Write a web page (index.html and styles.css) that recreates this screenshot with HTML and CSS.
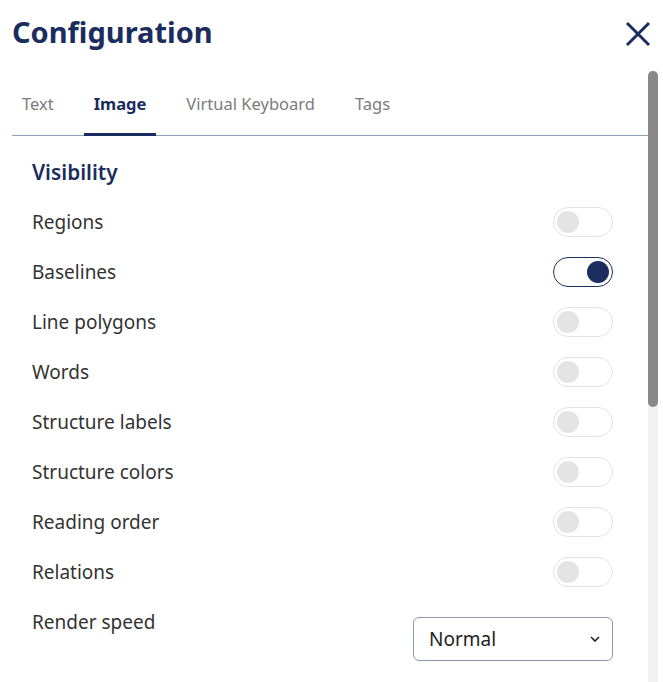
FILE: index.html
```html
<!DOCTYPE html>
<html>
<head>
<meta charset="utf-8">
<link rel="stylesheet" href="styles.css">
</head>
<body>
<div class="dialog">
  <header class="header">
    <h1 class="title">Configuration</h1>
    <button class="close" aria-label="Close">
      <svg width="26" height="26" viewBox="0 0 26 26"><path d="M2 2 L24 24 M24 2 L2 24" stroke="#1b2d5e" stroke-width="3" fill="none"/></svg>
    </button>
  </header>
  <div class="body">
    <div class="scroll">
      <nav class="tabs">
        <div class="tab">Text</div>
        <div class="tab active">Image</div>
        <div class="tab">Virtual Keyboard</div>
        <div class="tab">Tags</div>
      </nav>
      <section class="panel">
        <h2 class="section-title">Visibility</h2>
        <div class="row"><span class="label">Regions</span><span class="toggle"><span class="knob"></span></span></div>
        <div class="row"><span class="label">Baselines</span><span class="toggle on"><span class="knob"></span></span></div>
        <div class="row"><span class="label">Line polygons</span><span class="toggle"><span class="knob"></span></span></div>
        <div class="row"><span class="label">Words</span><span class="toggle"><span class="knob"></span></span></div>
        <div class="row"><span class="label">Structure labels</span><span class="toggle"><span class="knob"></span></span></div>
        <div class="row"><span class="label">Structure colors</span><span class="toggle"><span class="knob"></span></span></div>
        <div class="row"><span class="label">Reading order</span><span class="toggle"><span class="knob"></span></span></div>
        <div class="row"><span class="label">Relations</span><span class="toggle"><span class="knob"></span></span></div>
        <div class="row row-select">
          <span class="label">Render speed</span>
          <div class="select">
            <span>Normal</span>
            <svg width="10" height="6" viewBox="0 0 10 6"><path d="M1 1 L5 5 L9 1" stroke="#222" stroke-width="1.6" fill="none"/></svg>
          </div>
        </div>
      </section>
    </div>
    <div class="scrollbar"><div class="thumb"></div></div>
  </div>
</div>
</body>
</html>
```
FILE: styles.css
```css
html, body {
  margin: 0;
  padding: 0;
  background: #fff;
  font-family: "Noto Sans", "Open Sans", sans-serif;
  overflow: hidden;
}
.dialog {
  width: 663px;
  height: 682px;
  display: flex;
  flex-direction: column;
}
.header {
  display: flex;
  justify-content: space-between;
  align-items: flex-start;
  padding: 0 12px 0 12px;
  height: 71px;
  box-sizing: border-box;
  flex: none;
}
.title {
  margin: 0;
  padding-top: 11px;
  font-size: 29px;
  line-height: 42px;
  font-weight: 700;
  color: #1b2d5e;
}
.close {
  border: none;
  background: none;
  padding: 0;
  margin-top: 21px;
  width: 26px;
  height: 26px;
  display: flex;
}
.body {
  flex: 1;
  min-height: 0;
  display: flex;
  padding-right: 5px;
}
.scroll {
  flex: 1;
  overflow: hidden;
  padding-left: 12px;
}
.scrollbar {
  width: 10px;
  background: #f1f1f1;
  flex: none;
}
.thumb {
  height: 336px;
  background: #888;
  border-radius: 5px;
}
.tabs {
  display: flex;
  gap: 20px;
  border-bottom: 1px solid #8fa0bd;
}
.tab {
  padding: 21px 10px 18px;
  font-size: 16.5px;
  line-height: 23px;
  color: #7b7b7b;
  border-bottom: 3px solid transparent;
  margin-bottom: -1px;
}
.tab.active {
  color: #1b2d5e;
  font-weight: 700;
  border-bottom-color: #1b2d5e;
}
.panel {
  padding: 21px 35px 0 20px;
}
.section-title {
  margin: 0 0 10px;
  font-size: 20.8px;
  line-height: 30px;
  font-weight: 600;
  color: #1b2d5e;
}
.row {
  height: 50px;
  display: flex;
  align-items: center;
  justify-content: space-between;
}
.label {
  font-size: 19px;
  line-height: 30px;
  color: #333;
}
.toggle {
  width: 60px;
  height: 30px;
  box-sizing: border-box;
  border: 1px solid #e3e3e3;
  border-radius: 15px;
  display: flex;
  align-items: center;
  padding: 0 3px;
}
.knob {
  width: 22px;
  height: 22px;
  border-radius: 50%;
  background: #e4e4e4;
}
.toggle.on {
  border: 1.5px solid #1b2d5e;
  justify-content: flex-end;
}
.toggle.on .knob {
  background: #1b2d5e;
}
.row-select {
  height: auto;
  align-items: flex-start;
  padding-top: 10px;
}
.select {
  margin-top: 10px;
  width: 200px;
  height: 44px;
  box-sizing: border-box;
  border: 1px solid #8e97b0;
  border-radius: 6px;
  display: flex;
  align-items: center;
  justify-content: space-between;
  padding: 0 12px 0 15px;
  font-size: 19px;
  color: #222;
}
```
